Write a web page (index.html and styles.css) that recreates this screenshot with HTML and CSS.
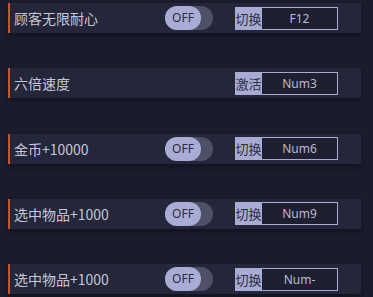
FILE: index.html
```html
<!DOCTYPE html>
<html>
<head>
<meta charset="utf-8">
<link rel="stylesheet" href="styles.css">
</head>
<body>
<div class="list">
  <div class="row">
    <div class="name">顾客无限耐心</div>
    <div class="toggle"><span class="knob">OFF</span></div>
    <div class="hotkey"><span class="label">切换</span><span class="key">F12</span></div>
  </div>
  <div class="row">
    <div class="name">六倍速度</div>
    <div class="hotkey"><span class="label">激活</span><span class="key">Num3</span></div>
  </div>
  <div class="row">
    <div class="name">金币+10000</div>
    <div class="toggle"><span class="knob">OFF</span></div>
    <div class="hotkey"><span class="label">切换</span><span class="key">Num6</span></div>
  </div>
  <div class="row">
    <div class="name">选中物品+1000</div>
    <div class="toggle"><span class="knob">OFF</span></div>
    <div class="hotkey"><span class="label">切换</span><span class="key">Num9</span></div>
  </div>
  <div class="row">
    <div class="name">选中物品+1000</div>
    <div class="toggle"><span class="knob">OFF</span></div>
    <div class="hotkey"><span class="label">切换</span><span class="key">Num-</span></div>
  </div>
</div>
</body>
</html>
```
FILE: styles.css
```css
html, body {
  margin: 0;
  padding: 0;
  background: #1b1c2b;
  width: 373px;
  height: 297px;
  overflow: hidden;
}
body {
  font-family: "Noto Sans CJK SC", "Noto Sans", sans-serif;
}
.list {
  display: flex;
  flex-direction: column;
  gap: 35.25px;
  padding-top: 3px;
  padding-left: 8px;
}
.row {
  width: 353px;
  height: 30px;
  box-sizing: border-box;
  background: #24263a;
  border-left: 2px solid #c4552c;
  box-shadow: 0 3px 4px rgba(10, 10, 20, 0.45);
  display: grid;
  grid-template-columns: 155px 70px 103px;
  align-items: center;
}
.name {
  grid-column: 1;
  color: #c5c7d6;
  font-size: 14px;
  padding-left: 4px;
  line-height: 30px;
  white-space: nowrap;
}
.toggle {
  grid-column: 2;
  width: 48px;
  height: 24px;
  border-radius: 12px;
  background: #4d5066;
  display: flex;
}
.knob {
  width: 36px;
  height: 24px;
  border-radius: 12px;
  background: #a9add6;
  color: #2a2c44;
  font-family: "Noto Sans", "Open Sans", sans-serif;
  font-size: 12px;
  line-height: 24px;
  text-align: center;
}
.hotkey {
  grid-column: 3;
  display: flex;
  height: 23px;
}
.label {
  width: 27px;
  background: #a8acd4;
  color: #2c2e44;
  font-size: 13px;
  line-height: 23px;
  text-align: center;
  white-space: nowrap;
}
.key {
  width: 76px;
  box-sizing: border-box;
  border: 1px solid #a8acd4;
  border-left: none;
  background: #1e2032;
  color: #b9bcd0;
  font-family: "Noto Sans", "Open Sans", sans-serif;
  font-size: 12px;
  line-height: 21px;
  text-align: center;
}
```
